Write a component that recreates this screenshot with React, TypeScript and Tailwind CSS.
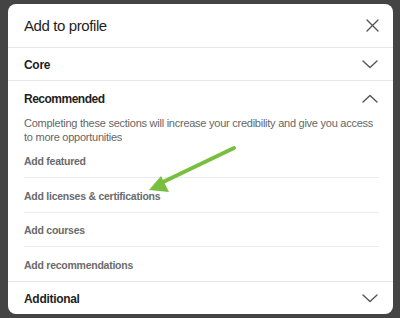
import React from "react";

const Chevron = ({ up = false }: { up?: boolean }) => (
  <svg width="16" height="9" viewBox="0 0 16 9" fill="none" className="shrink-0">
    <path
      d={up ? "M1 8 L8 1.5 L15 8" : "M1 1 L8 7.5 L15 1"}
      stroke="#555"
      strokeWidth="1.4"
      strokeLinecap="round"
      strokeLinejoin="round"
    />
  </svg>
);

export default function App() {
  const items = [
    "Add featured",
    "Add licenses & certifications",
    "Add courses",
    "Add recommendations",
  ];
  return (
    <div
      className="w-[400px] h-[318px] bg-[#444444] overflow-hidden relative pl-[8px] pt-[4px]"
      style={{ fontFamily: '"Liberation Sans", Arial, sans-serif' }}
    >
      <div className="w-[385px] h-[310px] bg-white rounded-[8px] overflow-hidden flex flex-col">
        <div className="h-[44px] shrink-0 flex items-center justify-between pl-[16px] pr-[14px] border-b border-[#e8e8e8]">
          <span className="text-[15px] tracking-[-0.4px] text-[#1f1f1f] pt-[2px]">Add to profile</span>
          <svg width="13" height="13" viewBox="0 0 13 13" fill="none">
            <path d="M1 1 L12 12 M12 1 L1 12" stroke="#555" strokeWidth="1.4" strokeLinecap="round" />
          </svg>
        </div>
        <div className="h-[33px] shrink-0 flex items-center justify-between pl-[16px] pr-[15px] border-b border-[#e8e8e8]">
          <span className="text-[12px] tracking-[-0.3px] font-bold text-[#1f1f1f] pt-[1px]">Core</span>
          <Chevron />
        </div>
        <div className="flex flex-col pl-[16px] pr-[14px] shrink-0">
          <div className="h-[35px] flex items-center justify-between pr-[1px]">
            <span className="text-[12px] tracking-[-0.5px] font-bold text-[#1f1f1f] pt-[1px]">Recommended</span>
            <Chevron up />
          </div>
          <div className="h-[28px] mr-[3px] text-[11px] leading-[14px] tracking-[-0.25px] text-[#666]">
            Completing these sections will increase your credibility and give you access to more opportunities
          </div>
          <div className="flex flex-col">
            {items.map((t, i) => (
              <div
                key={t}
                className={
                  "h-[34.25px] flex items-center pt-[3px] text-[10.5px] tracking-[-0.25px] font-bold text-[#6b6b6b] " +
                  (i < items.length - 1 ? "border-b border-[#ececec]" : "")
                }
              >
                {t}
              </div>
            ))}
          </div>
        </div>
        <div className="h-[33px] shrink-0 flex items-center justify-between pl-[16px] pr-[15px] border-t border-[#e8e8e8]">
          <span className="text-[12px] tracking-[-0.3px] font-bold text-[#1f1f1f] pt-[1px]">Additional</span>
          <Chevron />
        </div>
      </div>
      <svg className="absolute left-0 top-0" width="400" height="318" viewBox="0 0 400 318">
        <line x1="234" y1="148" x2="163" y2="182" stroke="#78bf3f" strokeWidth="4" strokeLinecap="round" />
        <polygon points="149,190 161,176 169,192" fill="#78bf3f" />
      </svg>
    </div>
  );
}
